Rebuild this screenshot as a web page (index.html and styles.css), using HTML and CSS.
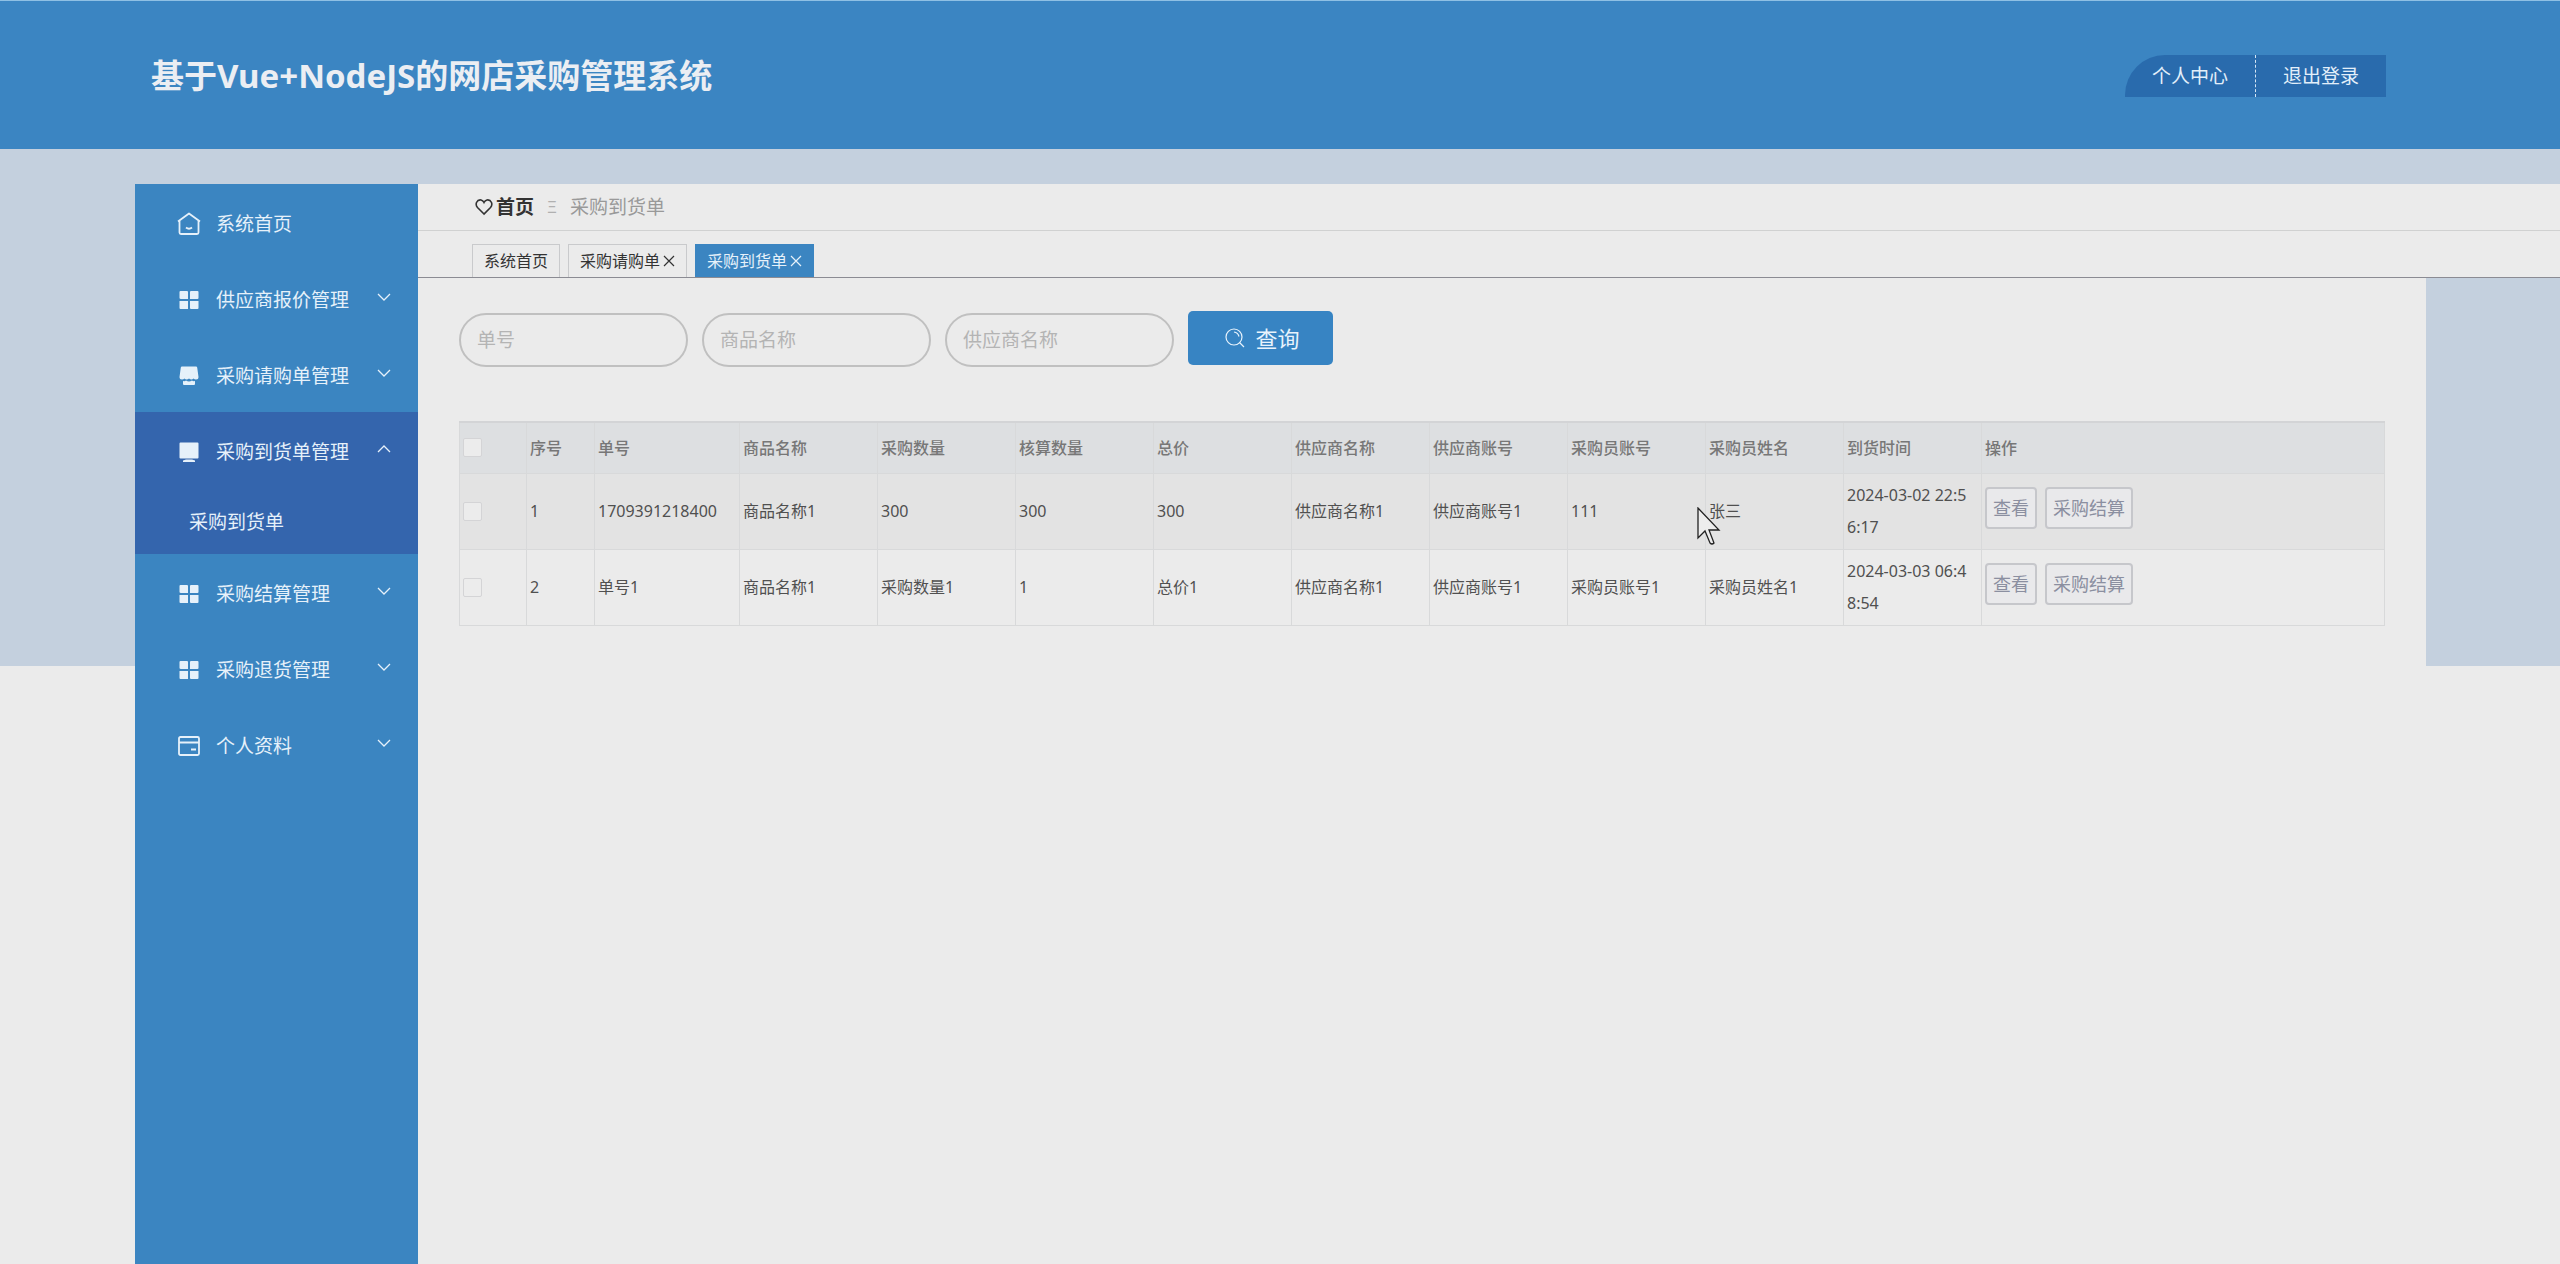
FILE: index.html
```html
<!DOCTYPE html>
<html lang="zh-CN">
<head>
<meta charset="utf-8">
<title>基于Vue+NodeJS的网店采购管理系统</title>
<link rel="stylesheet" href="styles.css">
</head>
<body>
<svg class="sprite" aria-hidden="true">
  <symbol id="grid" viewBox="0 0 24 24"><path fill="currentColor" d="M3.500 3h6.500q1 0 1 1v7h-7q-1.500 0-1.500-1V4q0-1 1-1zM14 3h6.500q1 0 1 1v6q0 1-1 1H13V4q0-1 1-1zM2.500 13H11v8H3.500q-1 0-1-1zM13 13h8.500v7q0 1-1 1H14q-1 0-1-1z"/></symbol>
  <symbol id="down" viewBox="0 0 14 14"><path d="M1 4l6 6 6-6" fill="none" stroke="currentColor" stroke-width="1.300"/></symbol>
  <symbol id="up" viewBox="0 0 14 14"><path d="M1 10l6-6 6 6" fill="none" stroke="currentColor" stroke-width="1.300"/></symbol>
  <symbol id="close" viewBox="0 0 12 12"><path d="M1 1l10 10M11 1L1 11" fill="none" stroke="currentColor" stroke-width="1.200"/></symbol>
</svg>

<header class="topbar">
  <h1 class="title">基于Vue+NodeJS的网店采购管理系统</h1>
  <nav class="account">
    <a class="account-link" href="#profile">个人中心</a>
    <a class="account-link" href="#logout">退出登录</a>
  </nav>
</header>

<div class="layout">
  <nav class="sidebar">
    <a class="item" href="#home">
      <svg class="icon" viewBox="0 0 24 24"><path d="M1 9.500L12 1.500l11 8M2.500 9v11.500q0 1.500 1.500 1.500h16q1.500 0 1.500-1.500V9M9 15.500q3 2.500 6 0" fill="none" stroke="currentColor" stroke-width="1.800" stroke-linejoin="round"/></svg>
      <span class="label">系统首页</span>
    </a>
    <a class="item" href="#quote">
      <svg class="icon"><use href="#grid"/></svg><span class="label">供应商报价管理</span><svg class="arrow"><use href="#down"/></svg>
    </a>
    <a class="item" href="#request">
      <svg class="icon" viewBox="0 0 24 24"><path fill="currentColor" d="M5 2.500h14q1 0 1.200 1L21.500 13q0 2.500-2.500 2.500-1.500 0-2.500-1-2 2-4.500 0-2.500 2-4.500 0-1 1-2.500 1-2.500 0-2.500-2.500L3.800 3.500Q4 2.500 5 2.500zM6 17q2 .5 3-.5 3 2 6 0 1 1 3 .500v3q0 1-1 1H7q-1 0-1-1z"/></svg>
      <span class="label">采购请购单管理</span><svg class="arrow"><use href="#down"/></svg>
    </a>
    <div class="group">
      <a class="item" href="#arrival">
        <svg class="icon" viewBox="0 0 24 24"><path fill="currentColor" d="M3.500 2.500h17q1 0 1 1v14q0 1-1 1h-17q-1 0-1-1v-14q0-1 1-1zM9 19.500h6l3 1v1.500H6v-1.500z"/></svg>
        <span class="label">采购到货单管理</span><svg class="arrow"><use href="#up"/></svg>
      </a>
      <a class="subitem" href="#arrival-list">采购到货单</a>
    </div>
    <a class="item" href="#settle">
      <svg class="icon"><use href="#grid"/></svg><span class="label">采购结算管理</span><svg class="arrow"><use href="#down"/></svg>
    </a>
    <a class="item" href="#return">
      <svg class="icon"><use href="#grid"/></svg><span class="label">采购退货管理</span><svg class="arrow"><use href="#down"/></svg>
    </a>
    <a class="item" href="#me">
      <svg class="icon" viewBox="0 0 24 24"><path d="M3.500 3h17q1.500 0 1.500 1.500v15q0 1.500-1.500 1.500h-17Q2 21 2 19.500v-15Q2 3 3.500 3zM2 8.500h20M14 15.500h5" fill="none" stroke="currentColor" stroke-width="1.800"/></svg>
      <span class="label">个人资料</span><svg class="arrow"><use href="#down"/></svg>
    </a>
  </nav>

  <main class="main">
    <div class="crumbs">
      <a class="crumb-home" href="#home"><svg class="heart" viewBox="0 0 18 18"><path d="M9 16L2.500 9.500Q.5 7 1.500 4.500 3 1.500 6 2q2 .5 3 2.500 1-2 3-2.500 3-.5 4.500 2.500 1 2.500-1 5z" fill="none" stroke="currentColor" stroke-width="1.600"/></svg>首页</a>
      <span class="sep">Ξ</span>
      <span class="crumb">采购到货单</span>
    </div>
    <div class="tabs">
      <a class="tab" href="#home">系统首页</a>
      <a class="tab" href="#request">采购请购单<svg class="close"><use href="#close"/></svg></a>
      <a class="tab tab-active" href="#arrival-list">采购到货单<svg class="close"><use href="#close"/></svg></a>
    </div>
    <section class="content">
      <form class="search">
        <input class="field" type="text" placeholder="单号" aria-label="单号">
        <input class="field" type="text" placeholder="商品名称" aria-label="商品名称">
        <input class="field" type="text" placeholder="供应商名称" aria-label="供应商名称">
        <button class="query" type="button"><svg class="glass" viewBox="0 0 20 20"><circle cx="9" cy="9" r="8" fill="none" stroke="currentColor" stroke-width="1.200"/><path d="M9 4q4 .5 5 4.500M14.500 14.500L19 19" fill="none" stroke="currentColor" stroke-width="1.200"/></svg>查询</button>
      </form>
      <table class="orders">
        <colgroup><col class="c-check"><col class="c-index"><col class="c-number"><col class="c-text" span="9"><col></colgroup>
        <thead>
          <tr><th><input class="tick" type="checkbox" aria-label="全选"></th><th>序号</th><th>单号</th><th>商品名称</th><th>采购数量</th><th>核算数量</th><th>总价</th><th>供应商名称</th><th>供应商账号</th><th>采购员账号</th><th>采购员姓名</th><th>到货时间</th><th>操作</th></tr>
        </thead>
        <tbody>
          <tr class="hover"><td><input class="tick" type="checkbox" aria-label="选择第1行"></td><td>1</td><td>1709391218400</td><td>商品名称1</td><td>300</td><td>300</td><td>300</td><td>供应商名称1</td><td>供应商账号1</td><td>111</td><td>张三</td><td>2024-03-02 22:56:17</td><td><div class="actions"><button class="action" type="button">查看</button><button class="action" type="button">采购结算</button></div></td></tr>
          <tr><td><input class="tick" type="checkbox" aria-label="选择第2行"></td><td>2</td><td>单号1</td><td>商品名称1</td><td>采购数量1</td><td>1</td><td>总价1</td><td>供应商名称1</td><td>供应商账号1</td><td>采购员账号1</td><td>采购员姓名1</td><td>2024-03-03 06:48:54</td><td><div class="actions"><button class="action" type="button">查看</button><button class="action" type="button">采购结算</button></div></td></tr>
        </tbody>
      </table>
    </section>
  </main>
</div>
<svg class="pointer" viewBox="0 0 24 38" aria-hidden="true"><path d="M1 1v30l7-7 5 12q2 2 4 0l-5-13h10z" fill="#ededed" stroke="#222" stroke-width="1.300"/></svg>
</body>
</html>
```
FILE: styles.css
```css
* { box-sizing: border-box; }

body {
  margin: 0;
  min-height: 100vh;
  display: flex;
  flex-direction: column;
  background: #ebebeb;
  color: #444;
  font: 16px/32px "Noto Sans", "Noto Sans CJK SC", sans-serif;
}

a { color: inherit; text-decoration: none; }
.sprite { display: none; }

/* header */
.topbar {
  display: flex;
  align-items: center;
  justify-content: space-between;
  height: 149px;
  padding: 2px 174px 0 151px;
  border-top: 1px solid #8fc0e4;
  background: #3b85c2;
  color: #ebeef3;
}
.title { margin: 0; font-size: 33px; line-height: 48px; }
.account {
  display: flex;
  border-top-left-radius: 40px;
  background: #296bad;
  color: #e3effa;
  font-size: 19px;
  line-height: 42px;
}
.account-link { padding: 0 27px; }
.account-link + .account-link { border-left: 1px dashed #d4e6f5; }

/* page body: tinted band behind the upper part */
.layout {
  flex: 1;
  display: flex;
  padding: 35px 0 0 135px;
  background: linear-gradient(#c4d0de, #c4d0de) top / 100% 517px no-repeat;
}

.sidebar {
  flex: none;
  width: 283px;
  background: #3b85c1;
  color: #e6f1fa;
  font-size: 19px;
}
.item {
  display: flex;
  align-items: center;
  height: 76px;
  padding: 4px 27px 0 42px;
}
.label { flex: 1; }
.icon { width: 24px; height: 24px; margin-right: 15px; }
.arrow { width: 14px; height: 14px; margin-bottom: 6px; }
.group { background: #3465ad; }
.subitem { display: block; height: 66px; padding: 18px 0 0 54px; }

.main { flex: 1; min-width: 0; display: flex; flex-direction: column; }
.crumbs {
  display: flex;
  align-items: center;
  height: 47px;
  padding-left: 57px;
  border-bottom: 1px solid #d0d1d1;
  background: #ebebeb;
  color: #999;
  font-size: 19px;
}
.crumb-home {
  display: flex;
  align-items: center;
  gap: 3px;
  color: #333;
  font-weight: bold;
}
.heart { width: 18px; height: 18px; }
.sep { margin: 0 13px; color: #b0b0b0; font-size: 16px; }
.tabs {
  display: flex;
  align-items: flex-end;
  gap: 8px;
  height: 47px;
  padding-left: 54px;
  border-bottom: 1px solid #8b8b93;
  background: #ebebeb;
}
.tab {
  display: flex;
  align-items: center;
  gap: 3px;
  height: 33px;
  padding: 0 11px;
  border: 1px solid #c9cacc;
  border-bottom: 0;
  color: #333;
}
.tab-active { border-color: #3b85c1; background: #3b85c1; color: #e6f1fa; }
.close { width: 12px; height: 12px; }

.content {
  flex: 1;
  margin-right: 134px;
  padding: 33px 41px;
  background: #ebebeb;
}
.search {
  display: flex;
  align-items: flex-end;
  gap: 14px;
  height: 56px;
  margin-bottom: 54px;
}
.field {
  width: 229px;
  height: 54px;
  padding: 0 16px;
  border: 2px solid #c0c0c0;
  border-radius: 27px;
  background: transparent;
  font: inherit;
  font-size: 19px;
}
.field::placeholder { color: #b4b4b4; opacity: 1; }
.query {
  display: flex;
  align-items: center;
  align-self: flex-start;
  justify-content: center;
  gap: 10px;
  width: 145px;
  height: 54px;
  padding: 0 0 0 4px;
  border: 0;
  border-radius: 5px;
  background: #3784c3;
  color: #e8f3fc;
  font: inherit;
  font-size: 22px;
}
.glass { width: 20px; height: 20px; }

/* table */
.orders {
  width: 100%;
  table-layout: fixed;
  border-collapse: collapse;
  border-top: 2px solid #d3d4d6;
  color: #505050;
}
.c-check { width: 67px; }
.c-index { width: 68px; }
.c-number { width: 145px; }
.c-text { width: 138px; }
.orders th, .orders td {
  padding: 0 6px 0 3px;
  border: 1px solid #d8d9da;
  text-align: left;
  word-break: break-all;
}
.orders th { height: 51px; background: #dddfe1; color: #777; font-weight: 500; }
.orders td { height: 76px; }
.hover { background: #e3e3e3; }
.tick {
  appearance: none;
  display: block;
  width: 19px;
  height: 19px;
  margin: 0;
  border: 1px solid #d4d4d6;
  border-radius: 2px;
  background: #ececec;
}
.actions { display: flex; gap: 8px; padding-bottom: 7px; }
.action {
  height: 42px;
  padding: 0 6px;
  border: 2px solid #c6c7cb;
  border-radius: 4px;
  background: #e9e9eb;
  color: #8b8fa0;
  font: inherit;
  font-size: 18px;
}

.pointer { position: absolute; left: 1697px; top: 507px; width: 24px; height: 38px; }
```
